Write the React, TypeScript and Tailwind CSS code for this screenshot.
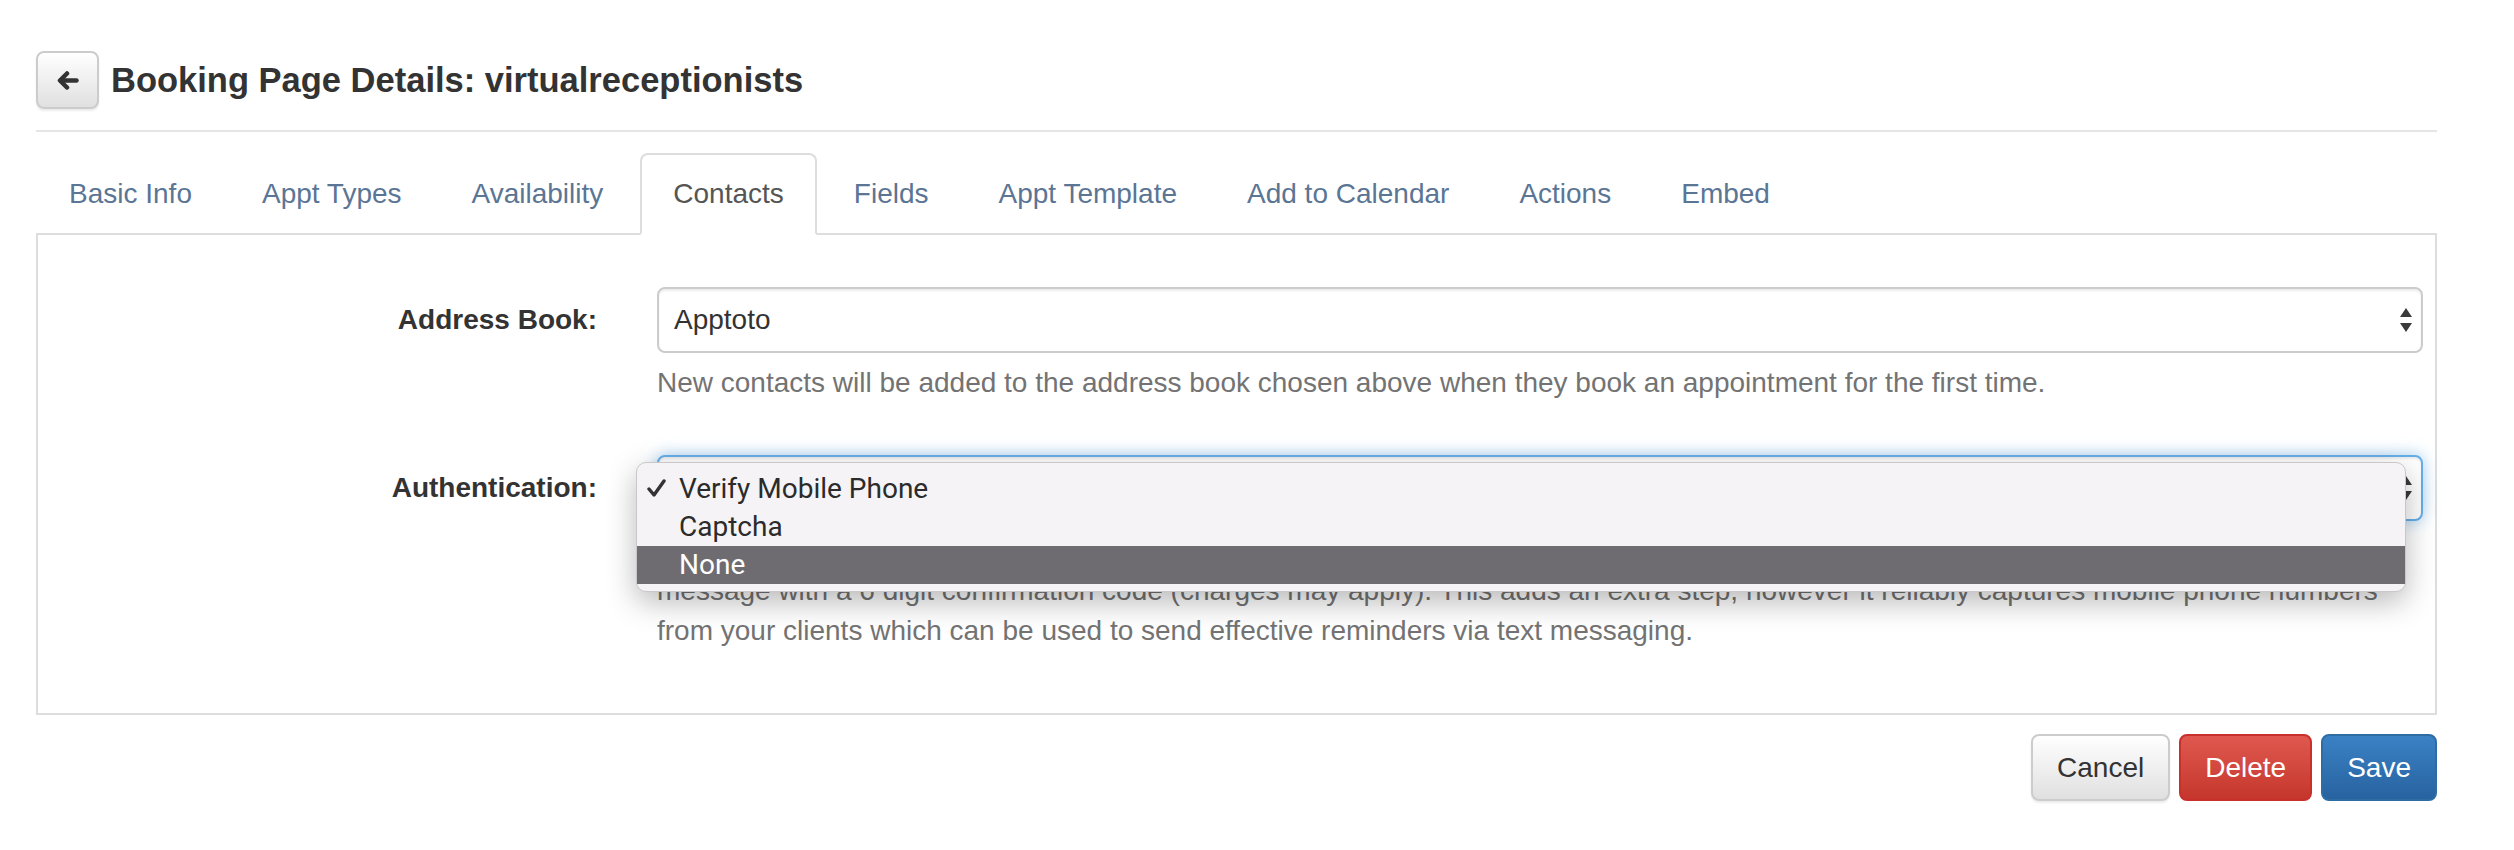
import React from "react";

const tabs = [
  "Basic Info",
  "Appt Types",
  "Availability",
  "Contacts",
  "Fields",
  "Appt Template",
  "Add to Calendar",
  "Actions",
  "Embed",
];

function SelectArrows() {
  return (
    <svg width="14" height="26" viewBox="0 0 14 26" className="shrink-0">
      <path d="M7 1 L13 10 H1 Z" fill="#3a3a3a" />
      <path d="M7 25 L13 16 H1 Z" fill="#3a3a3a" />
    </svg>
  );
}

function BackArrow() {
  return (
    <svg width="22" height="19" viewBox="0 0 22 19">
      <path
        d="M10 2.5 L3 9.5 L10 16.5"
        fill="none"
        stroke="#333"
        strokeWidth="4.5"
        strokeLinecap="round"
        strokeLinejoin="round"
      />
      <path d="M4 9.5 H19.5" fill="none" stroke="#333" strokeWidth="4.5" strokeLinecap="round" />
    </svg>
  );
}

function Check() {
  return (
    <svg width="19" height="18" viewBox="0 0 19 18">
      <path
        d="M2 10 L7 16 L17 2"
        fill="none"
        stroke="#333"
        strokeWidth="3.4"
        strokeLinecap="round"
        strokeLinejoin="round"
      />
    </svg>
  );
}

export default function App() {
  return (
    <div className="min-h-[850px] bg-white font-['Liberation_Sans',Arial,sans-serif] text-[28px] leading-[40px] text-[#333]">
      <div className="ml-[36px] w-[2401px] pt-[51px]">
        {/* Header */}
        <div className="flex items-center gap-[12px] border-b-2 border-[#e5e5e5] pb-[21px]">
          <button className="flex h-[58px] w-[63px] items-center justify-center rounded-[8px] border-2 border-[#ccc] bg-linear-to-b from-white to-[#e0e0e0] shadow-[0_2px_2px_rgba(0,0,0,0.08)]">
            <BackArrow />
          </button>
          <h1 className="text-[34.5px] font-bold leading-[40px] text-[#333]">
            Booking Page Details: virtualreceptionists
          </h1>
        </div>

        {/* Tabs */}
        <div className="mt-[21px] flex border-b-2 border-[#ddd]">
          {tabs.map((t) =>
            t === "Contacts" ? (
              <div
                key={t}
                className="-mb-[2px] mr-1 rounded-t-[8px] border-2 border-[#ddd] border-b-white bg-white px-[31px] py-[19px] text-[#555]"
              >
                {t}
              </div>
            ) : (
              <div
                key={t}
                className="-mb-[2px] mr-1 rounded-t-[8px] border-2 border-transparent px-[31px] py-[19px] text-[#5b7595]"
              >
                {t}
              </div>
            )
          )}
        </div>

        {/* Panel */}
        <div className="border-2 border-t-0 border-[#ddd] pb-[62px] pt-[52px]">
          {/* Address Book */}
          <div className="flex">
            <div className="flex h-[66px] w-[559px] shrink-0 items-center justify-end font-bold">
              Address Book:
            </div>
            <div className="ml-[60px] mr-[12px] flex-1">
              <div className="flex h-[66px] items-center justify-between rounded-[8px] border-2 border-[#ccc] bg-white pl-[15px] pr-[8px] shadow-[inset_0_2px_2px_rgba(0,0,0,0.075)]">
                <span>Apptoto</span>
                <SelectArrows />
              </div>
              <p className="mt-[10px] text-[#737373]">
                New contacts will be added to the address book chosen above when they book an
                appointment for the first time.
              </p>
            </div>
          </div>

          {/* Authentication */}
          <div className="mt-[52px] flex">
            <div className="flex h-[66px] w-[559px] shrink-0 items-center justify-end font-bold">
              Authentication:
            </div>
            <div className="relative ml-[60px] mr-[12px] flex-1">
              <div className="flex h-[66px] items-center justify-between rounded-[8px] border-2 border-[#66afe9] bg-white pl-[15px] pr-[8px] shadow-[inset_0_2px_2px_rgba(0,0,0,0.075),0_0_16px_rgba(102,175,233,0.6)]">
                <span>Verify Mobile Phone</span>
                <SelectArrows />
              </div>
              <p className="mt-[10px] text-[#737373]">
                <span className="block whitespace-nowrap">
                  Verify Mobile Phone requires clients to enter their mobile phone number when they
                  book, and they will then receive a text
                </span>
                <span className="block whitespace-nowrap">
                  message with a 6 digit confirmation code (charges may apply). This adds an extra
                  step, however it reliably captures mobile phone numbers
                </span>
                <span className="block whitespace-nowrap">
                  from your clients which can be used to send effective reminders via text
                  messaging.
                </span>
              </p>

              {/* open native menu */}
              <div className="absolute left-[-21px] top-[7px] w-[1770px] rounded-[10px] border border-[#c9c7ca] bg-[#f5f3f5] py-[7px] font-['Roboto',sans-serif] text-[28px] leading-[38px] text-[#2b2b2b] shadow-[0_10px_30px_rgba(0,0,0,0.28)]">
                <div className="relative h-[38px] pl-[42px]">
                  <span className="absolute left-[10px] top-[9px] flex">
                    <Check />
                  </span>
                  Verify Mobile Phone
                </div>
                <div className="h-[38px] pl-[42px]">Captcha</div>
                <div className="h-[38px] bg-[#6f6c71] pl-[42px] text-white">None</div>
              </div>
            </div>
          </div>
        </div>

        {/* Buttons */}
        <div className="mt-[19px] flex justify-end gap-[9px]">
          <button className="h-[67px] rounded-[8px] border-2 border-[#ccc] bg-linear-to-b from-white to-[#e0e0e0] px-[24px] text-[#333] shadow-[0_2px_2px_rgba(0,0,0,0.08)]">
            Cancel
          </button>
          <button className="h-[67px] rounded-[8px] border-2 border-[#c9302c] bg-linear-to-b from-[#e0584f] to-[#c4362c] px-[24px] text-white">
            Delete
          </button>
          <button className="h-[67px] rounded-[8px] border-2 border-[#2e6da4] bg-linear-to-b from-[#3a82c4] to-[#2862a0] px-[24px] text-white">
            Save
          </button>
        </div>
      </div>
    </div>
  );
}
